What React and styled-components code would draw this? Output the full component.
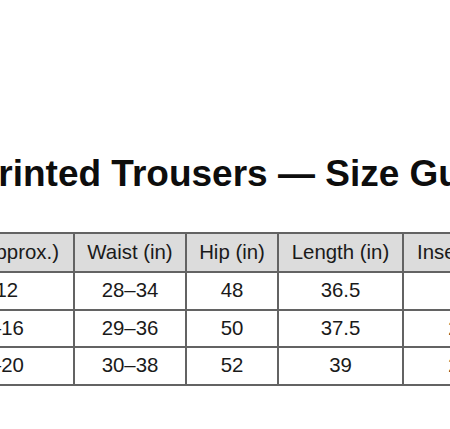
import React from 'react'
import styled, { createGlobalStyle } from 'styled-components'

const Global = createGlobalStyle`
  html, body {
    margin: 0;
    padding: 0;
    background: #fff;
  }
  body {
    font-family: 'Liberation Sans', Arial, sans-serif;
    color: #111;
  }
`

const Page = styled.div`
  width: 450px;
  height: 429px;
  overflow: hidden;
  display: flex;
  flex-direction: column;
  align-items: center;
  padding-top: 153px;
  box-sizing: border-box;
`

const Title = styled.h1`
  margin: 0 0 37px 38px;
  font-size: 37px;
  line-height: 42px;
  font-weight: bold;
  white-space: nowrap;
  color: #0d0d0d;
`

const Table = styled.table`
  flex: none;
  width: ${p => p.$w}px;
  border-collapse: collapse;
  table-layout: fixed;
  font-size: 20.4px;
  color: #1a1a1a;
`

const Col = styled.col`
  width: ${p => p.$w}px;
`

const HeadCell = styled.th`
  font-weight: normal;
  background: #dcdcdc;
  border: 2px solid #636363;
  padding: 7px 0;
  line-height: 23px;
  text-align: center;
  white-space: nowrap;
`

const Cell = styled.td`
  border: 2px solid #636363;
  padding: 6px 0;
  line-height: 23.5px;
  text-align: center;
  white-space: nowrap;
`

const columns = [
  { label: 'Size (approx.)', w: 157 },
  { label: 'Waist (in)', w: 112 },
  { label: 'Hip (in)', w: 92 },
  { label: 'Length (in)', w: 125 },
  { label: 'Inseam (in)', w: 130 },
]

const rows = [
  ['8–12', '28–34', '48', '36.5', '28'],
  ['14–16', '29–36', '50', '37.5', '28.5'],
  ['18–20', '30–38', '52', '39', '29.5'],
]

const tableWidth = columns.reduce((s, c) => s + c.w, 0)

export default function App() {
  return (
    <>
      <Global />
      <Page>
        <Title>Printed Trousers — Size Guide</Title>
        <Table $w={tableWidth}>
          <colgroup>
            {columns.map(c => <Col key={c.label} $w={c.w} />)}
          </colgroup>
          <thead>
            <tr>
              {columns.map(c => <HeadCell key={c.label}>{c.label}</HeadCell>)}
            </tr>
          </thead>
          <tbody>
            {rows.map((r, i) => (
              <tr key={i}>
                {r.map((v, j) => <Cell key={j}>{v}</Cell>)}
              </tr>
            ))}
          </tbody>
        </Table>
      </Page>
    </>
  )
}
